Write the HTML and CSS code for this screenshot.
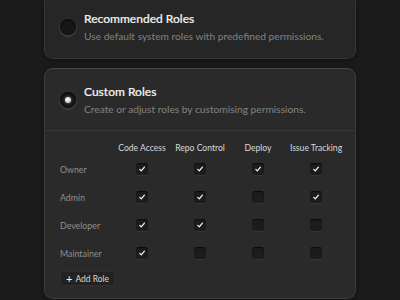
FILE: index.html
```html
<!DOCTYPE html>
<html lang="en">
<head>
  <meta charset="UTF-8" />
  <title>Roles</title>
  <link rel="stylesheet" href="styles.css">
</head>
<body>
  <div class="page">
    <div class="card card-top">
      <div class="option">
        <span class="radio"></span>
        <div class="option-text">
          <h3>Recommended Roles</h3>
          <p>Use default system roles with predefined permissions.</p>
        </div>
      </div>
    </div>

    <div class="card card-active">
      <div class="option">
        <span class="radio checked"></span>
        <div class="option-text">
          <h3>Custom Roles</h3>
          <p>Create or adjust roles by customising permissions.</p>
        </div>
      </div>

      <div class="perms">
        <div class="grid head">
          <span></span>
          <span>Code Access</span>
          <span>Repo Control</span>
          <span>Deploy</span>
          <span>Issue Tracking</span>
        </div>
        <div class="grid row">
          <span class="role">Owner</span>
          <span><i class="box on"></i></span>
          <span><i class="box on"></i></span>
          <span><i class="box on"></i></span>
          <span><i class="box on"></i></span>
        </div>
        <div class="grid row">
          <span class="role">Admin</span>
          <span><i class="box on"></i></span>
          <span><i class="box on"></i></span>
          <span><i class="box"></i></span>
          <span><i class="box on"></i></span>
        </div>
        <div class="grid row">
          <span class="role">Developer</span>
          <span><i class="box on"></i></span>
          <span><i class="box on"></i></span>
          <span><i class="box"></i></span>
          <span><i class="box"></i></span>
        </div>
        <div class="grid row">
          <span class="role">Maintainer</span>
          <span><i class="box on"></i></span>
          <span><i class="box"></i></span>
          <span><i class="box"></i></span>
          <span><i class="box"></i></span>
        </div>
        <button class="add-role"><span class="plus">+</span> Add Role</button>
      </div>
    </div>
  </div>

  <script>
    const check = '<svg viewBox="0 0 12 12" width="12" height="12"><polyline points="3.8,6.4 5.3,7.9 8.4,4.2" fill="none" stroke="#f2f2f2" stroke-width="1.3" stroke-linecap="round" stroke-linejoin="round"/></svg>';
    document.querySelectorAll(".box.on").forEach(el => el.innerHTML = check);
  </script>
</body>
</html>
```

FILE: styles.css
```css
* {
  margin: 0;
  padding: 0;
  box-sizing: border-box;
}

body, html {
  width: 100%;
  height: 100%;
  overflow: hidden;
  background-color: #1b1b1b;
  font-family: 'Lato', 'Liberation Sans', sans-serif;
  color: #ececec;
}

.page {
  display: flex;
  flex-direction: column;
  gap: 9px;
  padding: 0 44px;
}

.card {
  flex-shrink: 0;
  background-color: #262626;
  border: 1px solid #363636;
  border-top-color: #424242;
  border-radius: 9px;
  box-shadow: 0 2px 6px rgba(0, 0, 0, 0.35);
}

.card-top {
  margin-top: -6px;
}

.card-active {
  background-color: #2a2a2a;
  border-color: #3d3d3d;
  border-top-color: #4a4a4a;
  height: 231px;
}

.option {
  display: flex;
  align-items: center;
  gap: 8px;
  padding: 0 15px;
  height: 63px;
}

.card-active .option {
  height: 61px;
}

.radio {
  width: 16px;
  height: 16px;
  flex-shrink: 0;
  border-radius: 50%;
  background: #161616;
  box-shadow: inset 0 1px 2px rgba(0, 0, 0, 0.8), 0 0 0 1px #333, 0 1px 0 1px #444;
  display: flex;
  align-items: center;
  justify-content: center;
}

.radio.checked::after {
  content: "";
  width: 6px;
  height: 6px;
  border-radius: 50%;
  background: radial-gradient(circle at 40% 35%, #ffffff, #bdbdbd);
  box-shadow: 0 0 3px rgba(255, 255, 255, 0.5);
}

.option-text h3 {
  font-size: 12px;
  font-weight: 500;
  line-height: 16px;
  color: #f0f0f0;
  -webkit-text-stroke: 0.2px #f0f0f0;
}

.option-text p {
  margin-top: 2px;
  font-size: 10.2px;
  line-height: 14px;
  color: #828282;
  white-space: nowrap;
}

.perms {
  border-top: 1px solid #383838;
  padding: 10px 15px 0 15px;
}

.grid {
  display: grid;
  grid-template-columns: 53px repeat(4, 58px);
  align-items: center;
}

.grid span {
  display: flex;
  justify-content: center;
}

.grid span.role {
  justify-content: flex-start;
}

.head {
  height: 14px;
  font-size: 8.6px;
  color: #d8d8d8;
}

.head span {
  white-space: nowrap;
}

.row {
  height: 28px;
  font-size: 8.8px;
  color: #8f8f8f;
}

.box {
  display: block;
  width: 12px;
  height: 12px;
  border-radius: 3px;
  background: #1c1c1c;
  box-shadow: inset 0 1px 1px rgba(0, 0, 0, 0.6), 0 1px 0 #343434;
}

.box svg {
  display: block;
}

.add-role {
  margin-top: 4px;
  display: flex;
  align-items: center;
  gap: 3px;
  height: 15px;
  padding: 0 5px;
  background: #222;
  border: 1px solid #2e2e2e;
  border-radius: 3px;
  color: #d6d6d6;
  font-family: inherit;
  font-size: 8.5px;
}

.plus {
  font-size: 11px;
  line-height: 1;
  color: #f0f0f0;
}
```
